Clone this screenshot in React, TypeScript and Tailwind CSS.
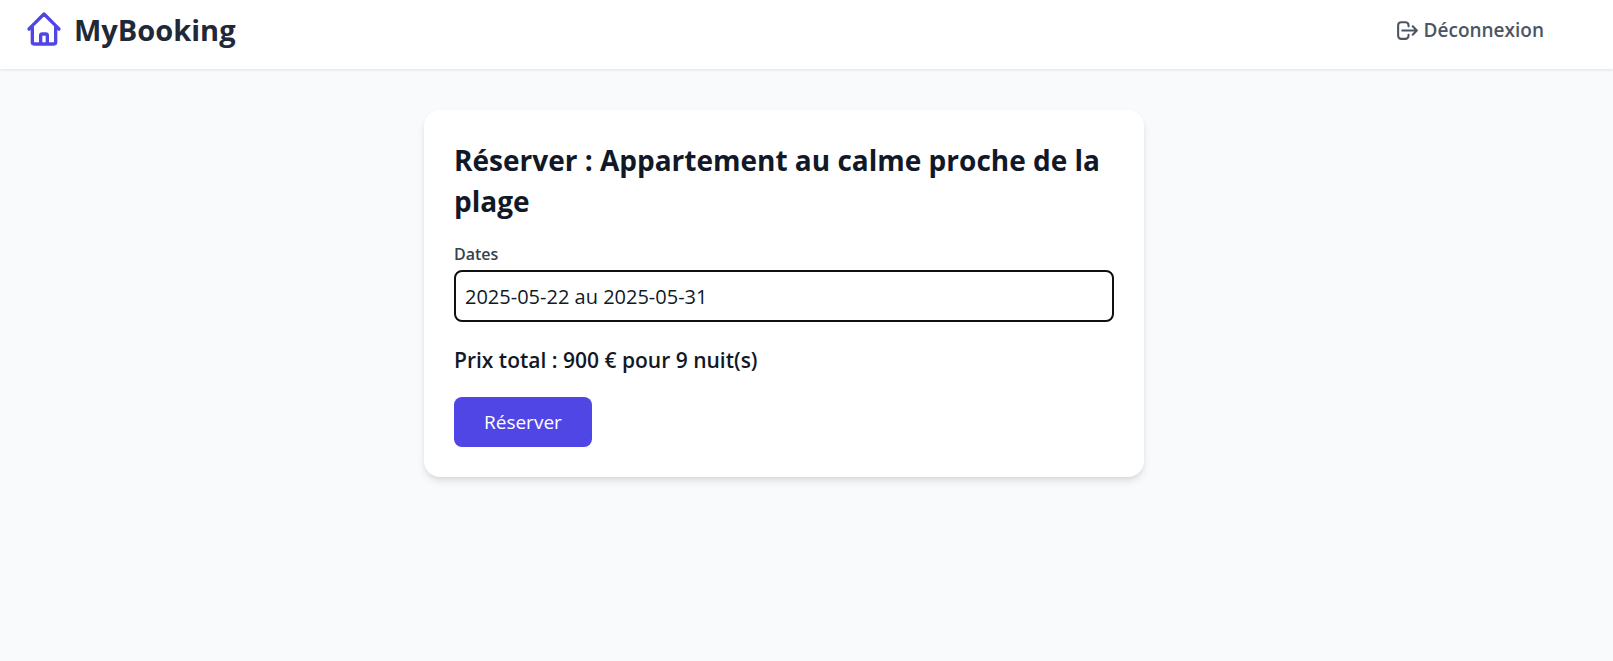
import { useState, type FormEvent } from "react";

function HomeIcon() {
  return (
    <svg
      className="size-10 shrink-0 text-[#4f46e5]"
      viewBox="0 0 24 24"
      fill="none"
      stroke="currentColor"
      strokeWidth="2"
      strokeLinecap="round"
      strokeLinejoin="round"
      aria-hidden="true"
    >
      <path d="M3 12l2-2m0 0l7-7 7 7M5 10v10a1 1 0 001 1h3m10-11l2 2m-2-2v10a1 1 0 01-1 1h-3m-6 0a1 1 0 001-1v-4a1 1 0 011-1h2a1 1 0 011 1v4a1 1 0 001 1m-6 0h6" />
    </svg>
  );
}

function LogoutIcon() {
  return (
    <svg
      className="size-[25px] shrink-0"
      viewBox="0 0 24 24"
      fill="none"
      stroke="currentColor"
      strokeWidth="2"
      strokeLinecap="round"
      strokeLinejoin="round"
      aria-hidden="true"
    >
      <path d="M17 16l4-4m0 0l-4-4m4 4H7m6 4v1a3 3 0 01-3 3H6a3 3 0 01-3-3V7a3 3 0 013-3h4a3 3 0 013 3v1" />
    </svg>
  );
}

function Header() {
  return (
    <header className="flex items-center justify-between bg-white pt-[9px] pr-[69px] pb-[18px] pl-6 shadow-[0_1px_3px_rgba(0,0,0,0.1)]">
      <a href="#" className="flex items-start gap-2.5 text-[29px] leading-[42px] font-bold text-[#1f2937]">
        <HomeIcon />
        MyBooking
      </a>
      <button type="button" className="flex items-center gap-1 text-[19px] leading-[30px] font-semibold text-[#4b5563]">
        <LogoutIcon />
        Déconnexion
      </button>
    </header>
  );
}

function BookingForm() {
  const [dates, setDates] = useState("2025-05-22 au 2025-05-31");
  const submit = (event: FormEvent) => event.preventDefault();

  return (
    <form
      onSubmit={submit}
      className="w-full max-w-[720px] rounded-2xl bg-white p-[30px] shadow-[0_5px_8px_-1px_rgba(0,0,0,0.1),0_2px_5px_-2px_rgba(0,0,0,0.1)]"
    >
      <h1 className="mb-5 text-[28px] leading-[41px] font-bold">
        Réserver : Appartement au calme proche de la plage
      </h1>
      <label htmlFor="dates" className="mb-[3px] block text-base leading-[25px] font-semibold text-[#374151]">
        Dates
      </label>
      <input
        id="dates"
        type="text"
        value={dates}
        onChange={(event) => setDates(event.target.value)}
        className="mb-5 block h-[52px] w-full rounded-lg border-2 border-[#101010] bg-white px-[9px] text-[20px] outline-none"
      />
      <p className="mb-[19px] text-[21px] leading-9 font-semibold">Prix total : 900 € pour 9 nuit(s)</p>
      <button
        type="submit"
        className="h-[50px] rounded-lg bg-[#4f46e5] px-[30px] text-[19px] leading-[30px] text-white"
      >
        Réserver
      </button>
    </form>
  );
}

export default function App() {
  return (
    <div className="min-h-screen bg-[#f9fafb] font-['Open_Sans','Noto_Sans',sans-serif] text-[#111827]">
      <Header />
      <main className="flex justify-center pt-[41px] pr-[45px] pb-10">
        <BookingForm />
      </main>
    </div>
  );
}
